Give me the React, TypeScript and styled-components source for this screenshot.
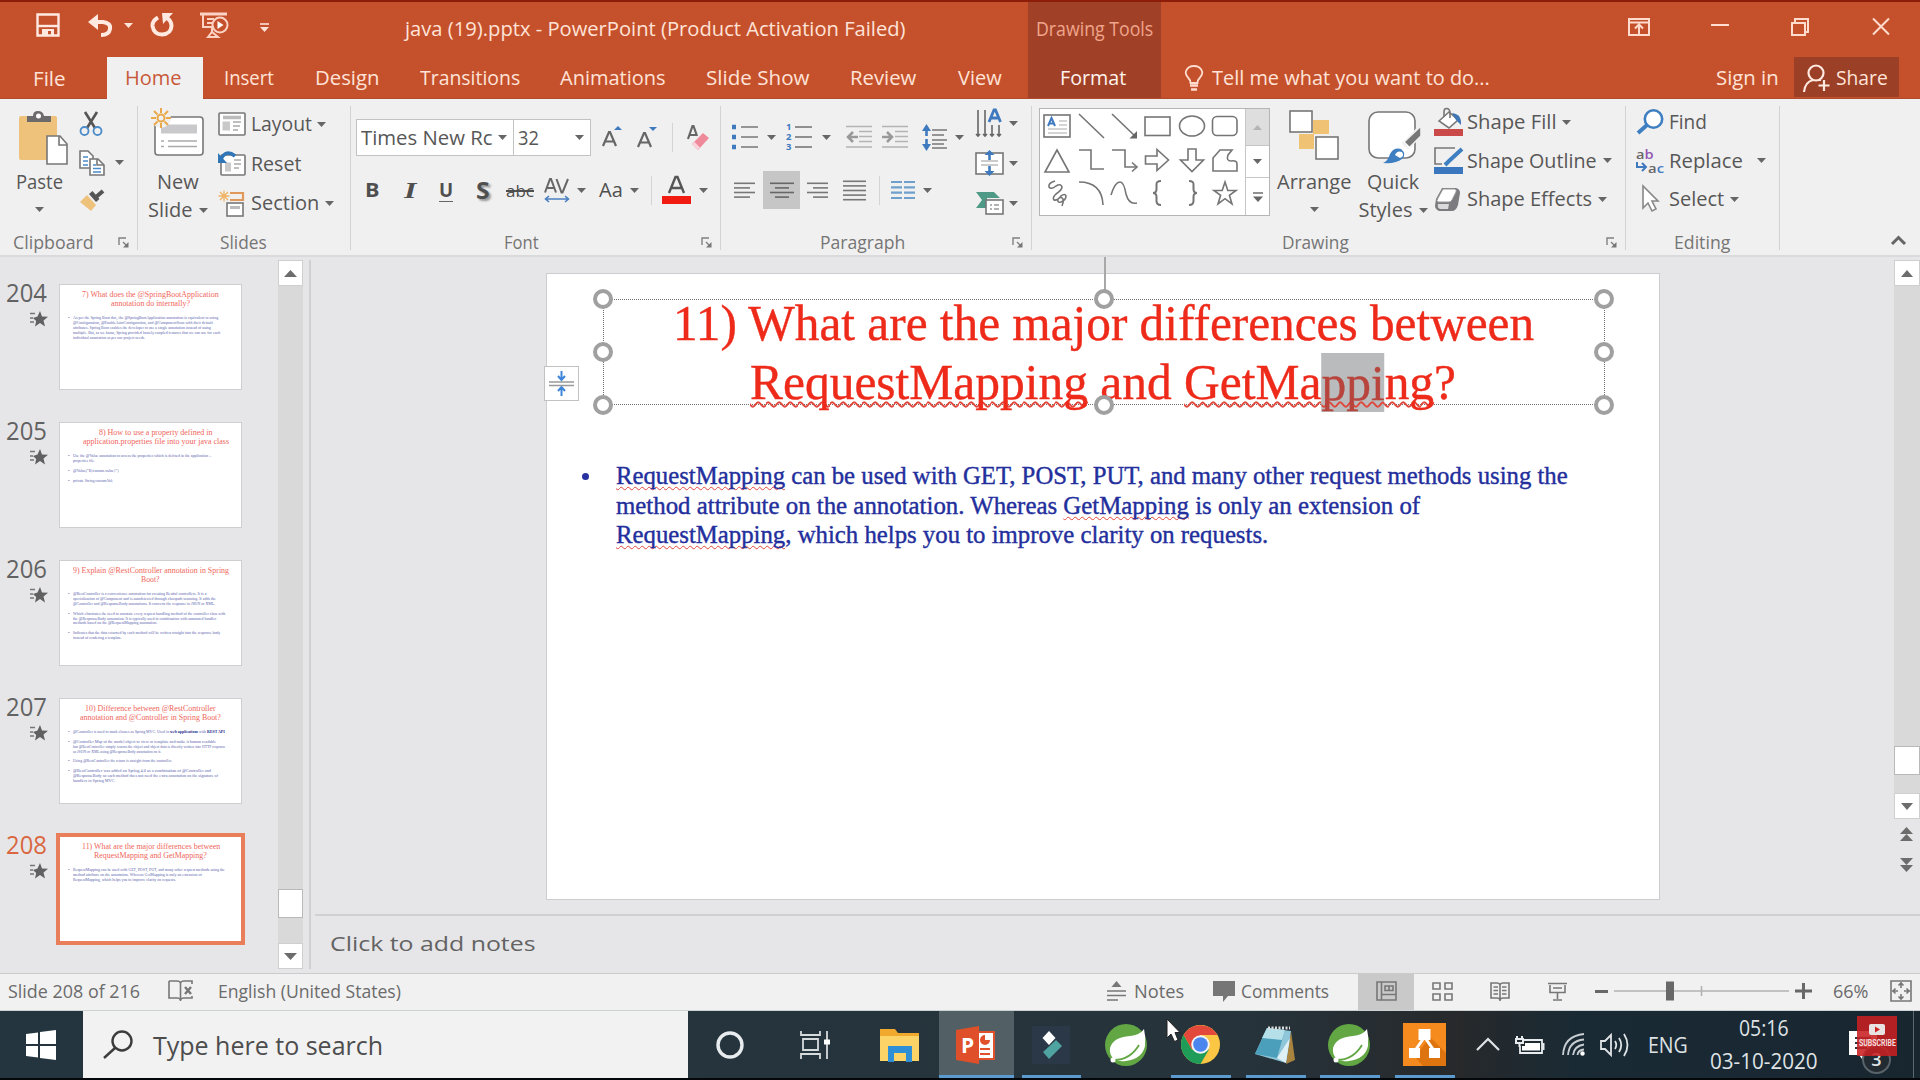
import React, { useLayoutEffect, useRef, useState } from 'react';
import styled, { createGlobalStyle, css } from 'styled-components';

const Global = createGlobalStyle`
  *, *::before, *::after { box-sizing: border-box; }
  html, body { margin: 0; padding: 0; background: #e6e6e8; }
  body { width: 1920px; height: 1080px; overflow: hidden; }
  svg { display: block; flex: none; overflow: visible; }
`;

const ui = '"Open Sans", "Noto Sans", sans-serif';
const serif = '"Liberation Serif", "Times New Roman", serif';
const ink = '#575757';
const blue = '#3f7abf';

/* ---------- text that is condensed to a given width ---------- */

const FitBox = styled.span<{ $w: number }>`
  display: block;
  flex: none;
  width: ${p => p.$w}px;
  white-space: nowrap;
`;
const FitInner = styled.span`
  display: inline-block;
  transform-origin: 0 50%;
  white-space: pre;
`;
function Fit({ w, children }: { w: number; children: React.ReactNode }) {
  const ref = useRef<HTMLSpanElement>(null);
  const [k, setK] = useState(1);
  useLayoutEffect(() => {
    const measure = () => ref.current && setK(w / ref.current.offsetWidth);
    measure();
    document.fonts?.ready.then(measure);
  }, [w]);
  return (
    <FitBox $w={w}>
      <FitInner ref={ref} style={{ transform: `scaleX(${k})` }}>{children}</FitInner>
    </FitBox>
  );
}

const Screen = styled.div`
  width: 1920px;
  height: 1080px;
  display: flex;
  flex-direction: column;
  font-family: ${ui};
  color: ${ink};
  overflow: hidden;
  position: relative;
`;

/* ---------- title bar ---------- */

const Header = styled.header`
  flex: none;
  height: 99px;
  background: #c5512c;
  border-top: 2px solid #8d1d08;
  color: #ffe3d8;
  font-size: 20px;
  line-height: 28px;
`;
const TitleRow = styled.div`
  display: flex;
  align-items: center;
  height: 55px;
`;
const TitleItem = styled.div<{ $gap: number; $drop?: number }>`
  margin-left: ${p => p.$gap}px;
  margin-top: ${p => p.$drop ?? -9}px;
  flex: none;
`;
const ContextTitle = styled.div`
  align-self: stretch;
  width: 133px;
  margin-left: 122px;
  padding: 13px 0 0 8px;
  background: #a04127;
  color: #f0a58c;
`;
const TabRow = styled.nav`
  display: flex;
  height: 42px;
  align-items: stretch;
  line-height: 42px;
  border-bottom: 1px solid #b04a2c;
`;
const Tab = styled.div<{ $gap: number; $drop?: number }>`
  margin-left: ${p => p.$gap}px;
  padding-top: ${p => p.$drop ?? 0}px;
  flex: none;
`;
const ActiveTab = styled.div`
  margin-left: 41px;
  width: 96px;
  height: 42px;
  padding-left: 18px;
  background: #f1f0f0;
  color: #c8593a;
`;
const FormatTab = styled.div`
  margin-left: 26px;
  width: 133px;
  padding-left: 32px;
  background: #a04127;
  color: #fff3ee;
`;
const ShareButton = styled.div`
  margin-left: 15px;
  width: 105px;
  height: 40px;
  padding: 2px 0 0 9px;
  display: flex;
  align-items: center;
  gap: 6px;
  background: #9b3f26;
`;

/* ---------- ribbon ---------- */

const Ribbon = styled.section`
  flex: none;
  height: 158px;
  display: flex;
  padding: 7px 0 6px;
  background: #f1f0f0;
  border-bottom: 2px solid #dadadc;
  font-size: 20px;
  line-height: 20px;
`;
const Group = styled.div<{ $w: number }>`
  flex: none;
  width: ${p => p.$w}px;
  height: 144px;
  border-right: 1px solid #d3d3d5;
  display: flex;
  flex-direction: column;
`;
const GroupBody = styled.div`
  height: 128px;
  display: flex;
  align-items: flex-start;
`;
const GroupFooter = styled.div<{ $left: number }>`
  height: 16px;
  padding: 0 8px 0 ${p => p.$left}px;
  display: flex;
  align-items: center;
  justify-content: space-between;
  font-size: 18px;
  line-height: 16px;
  color: #757575;
`;
const BigButton = styled.div<{ $gap: number; $w: number; $top: number }>`
  flex: none;
  margin-left: ${p => p.$gap}px;
  width: ${p => p.$w}px;
  padding-top: ${p => p.$top}px;
  display: flex;
  flex-direction: column;
  align-items: center;
`;
const BigIcon = styled.div<{ $nudge?: number }>`
  height: 62px;
  padding-left: ${p => p.$nudge ?? 0}px;
`;
const BigCaption = styled.div<{ $top?: number }>`
  margin-top: ${p => p.$top ?? 0}px;
  height: 20px;
  display: flex;
  align-items: center;
  gap: 6px;
`;
const ToolStack = styled.div<{ $gap: number; $top: number; $space: number }>`
  flex: none;
  margin-left: ${p => p.$gap}px;
  padding-top: ${p => p.$top}px;
  display: flex;
  flex-direction: column;
  gap: ${p => p.$space}px;
`;
const CommandRow = styled.div`
  height: 30px;
  display: flex;
  align-items: center;
`;
const CommandIcon = styled.div<{ $w: number }>`
  width: ${p => p.$w}px;
  flex: none;
`;
const CaretHolder = styled.div<{ $gap: number }>`
  margin-left: ${p => p.$gap}px;
`;
const ToolRow = styled.div<{ $top: number; $h: number }>`
  margin-top: ${p => p.$top}px;
  height: ${p => p.$h}px;
  display: flex;
  align-items: center;
`;
const Tool = styled.div<{ $gap: number; $w: number; $on?: boolean }>`
  flex: none;
  margin-left: ${p => p.$gap}px;
  width: ${p => p.$w}px;
  ${p => p.$on && css`
    align-self: stretch;
    display: flex;
    align-items: center;
    justify-content: center;
    background: #c6c6c6;
  `}
`;
const Rule = styled.div<{ $gap: number }>`
  flex: none;
  margin-left: ${p => p.$gap}px;
  width: 1px;
  height: 29px;
  background: #d4d4d4;
`;
const Combo = styled.div<{ $w: number; $gap: number }>`
  flex: none;
  margin-left: ${p => p.$gap}px;
  width: ${p => p.$w}px;
  height: 37px;
  border: 1px solid #c3c3c3;
  background: #fff;
  padding: 0 6px 0 4px;
  display: flex;
  align-items: center;
  justify-content: space-between;
`;
const Letter = styled.span<{ $bold?: boolean; $italic?: boolean; $under?: boolean; $strike?: boolean; $shadow?: boolean; $size?: number }>`
  display: block;
  line-height: 26px;
  font-size: ${p => p.$size ?? 20}px;
  font-weight: ${p => (p.$bold ? 700 : 400)};
  font-style: ${p => (p.$italic ? 'italic' : 'normal')};
  font-family: ${p => (p.$italic ? serif : ui)};
  color: #4f4f4f;
  ${p => p.$under && css`border-bottom: 1.5px solid #666; line-height: 23px;`}
  ${p => p.$strike && css`
    padding-top: 2px;
    & > span > span { text-decoration: line-through; text-decoration-thickness: 1.5px; }
  `}
  ${p => p.$shadow && css`text-shadow: 2px 2px 2px #999;`}
`;
const Gallery = styled.div`
  flex: none;
  margin: 2px 0 0 7px;
  width: 231px;
  height: 108px;
  border: 1px solid #b5b5b5;
  background: #fff;
  display: flex;
`;
const ShapeGrid = styled.div`
  width: 205px;
  padding-top: 1px;
  display: grid;
  grid-template-columns: repeat(6, 33.7px);
  grid-auto-rows: 33.6px;
  place-items: center;
`;
const GallerySide = styled.div`
  flex: 1;
  border-left: 1px solid #c6c6c6;
  display: flex;
  flex-direction: column;
`;
const GalleryArrow = styled.div<{ $h: number; $off?: boolean }>`
  height: ${p => p.$h}px;
  display: flex;
  align-items: center;
  justify-content: center;
  background: ${p => (p.$off ? '#dedede' : '#fff')};
  border-bottom: 1px solid #c6c6c6;
  &:last-child { border-bottom: 0; }
`;
const Collapse = styled.div`
  flex: 1;
  display: flex;
  align-items: flex-end;
  justify-content: flex-end;
  padding: 0 14px 4px 0;
`;

/* ---------- icons ---------- */

type SvgProps = { w: number; h: number; children: React.ReactNode; c?: string; sw?: number };
const Ic = ({ w, h, children, c = '#777', sw = 1.6 }: SvgProps) => (
  <svg width={w} height={h} viewBox={`0 0 ${w} ${h}`} fill="none" stroke={c} strokeWidth={sw}>{children}</svg>
);
const Caret = ({ c = '#666', up }: { c?: string; up?: boolean }) => (
  <Ic w={9} h={5} c="none"><path d={up ? 'M0 5L4.5 0L9 5Z' : 'M0 0H9L4.5 5Z'} fill={c} /></Ic>
);
const Launcher = () => (
  <Ic w={11} h={11} c="#808080" sw={1.4}><path d="M1 8V1H8M5 5L9 9" /><path d="M10.5 5V10.5H5Z" fill="#777" stroke="none" /></Ic>
);
const Lines = ({ w, rows, c = '#777', gap = 4.6 }: { w: number; rows: [number, number][]; c?: string; gap?: number }) => (
  <Ic w={w} h={rows.length * gap} c={c} sw={1.6}>
    {rows.map(([a, b], i) => <path key={i} d={`M${a} ${gap / 2 + i * gap}H${b}`} />)}
  </Ic>
);

const PasteIcon = () => (
  <Ic w={50} h={56}>
    <rect x="0" y="6" width="38" height="44" rx="2" fill="#eec27b" stroke="none" />
    <path d="M8 12V6H14Q14 1 19 1T25 6H32V12Z" fill="#6d6a6c" stroke="none" /><circle cx="19.500" cy="6" r="2.500" fill="#fff" stroke="none" />
    <path d="M28 26H41L48 34V54H28Z" fill="#fff" /><path d="M40 26V35H48" />
  </Ic>
);
const CutIcon = () => (
  <Ic w={26} h={26}>
    <path d="M6 1L16 17M18 1L8 17" stroke="#555" strokeWidth="2.600" />
    <circle cx="5.500" cy="20" r="4" stroke="#4a8bc9" strokeWidth="1.800" /><circle cx="18.500" cy="20" r="4" stroke="#4a8bc9" strokeWidth="1.800" />
  </Ic>
);
const CopyIcon = () => (
  <Ic w={26} h={26}>
    <path d="M1 1H9L14 6V18H1Z" fill="#fff" /><path d="M4 7H9M4 11H9M4 15H9" stroke="#4a8bc9" />
    <path d="M11 9H19L25 15V25H11Z" fill="#fff" /><path d="M18 9V15H25" /><path d="M14 15H17M14 18.500H22M14 22H22" stroke="#4a8bc9" />
  </Ic>
);
const BrushIcon = () => (
  <Ic w={26} h={23}>
    <path d="M8 6L17 16L12 22L1 13Z" fill="#eec27b" stroke="none" />
    <path d="M10 5L13.500 2L20.500 10L17 13Z" fill="#555" stroke="none" /><path d="M17 8L24 2" stroke="#555" strokeWidth="4" />
  </Ic>
);
const NewSlideIcon = () => (
  <Ic w={54} h={49}>
    <rect x="4" y="9" width="48" height="38" rx="3" fill="#fff" />
    <path d="M10 21H46" stroke="#c9c9cc" strokeWidth="9" /><path d="M10 33H13M17 33H46M10 38.500H13M17 38.500H46" stroke="#aaa" />
    <circle cx="10" cy="10" r="10" fill="#f1f0f0" stroke="none" />
    <g stroke="#e9a94a" strokeWidth="2"><path d="M10 0V5M10 15V20M0 10H5M15 10H20M3 3L6.500 6.500M13.500 13.500L17 17M17 3L13.500 6.500M6.500 13.500L3 17" /><circle cx="10" cy="10" r="3.500" /></g>
  </Ic>
);
const LayoutIcon = () => (
  <Ic w={28} h={24}><rect x="1" y="1" width="26" height="22" rx="1" fill="#fff" /><path d="M5 5.500H23" stroke="#bbb" strokeWidth="3.500" /><path d="M4.500 14H12" stroke="#c9c9c9" strokeWidth="9" /><path d="M15 10H23M15 14H22M15 18H20" stroke="#aaa" /></Ic>
);
const ResetIcon = () => (
  <Ic w={28} h={25}><rect x="3" y="4" width="24" height="20" rx="1" fill="#fff" /><path d="M7 16H13" stroke="#c9c9c9" strokeWidth="9" /><path d="M16 9H23M16 13H23M16 17H21" stroke="#aaa" /><path d="M17 5Q8 -2 3 8" stroke="#2f76b8" strokeWidth="3.500" /><path d="M0 2V12H9Z" fill="#2f76b8" stroke="none" /></Ic>
);
const SectionIcon = () => (
  <Ic w={28} h={27}><path d="M12 3H25V10H12" stroke="#e0995a" strokeWidth="2.200" /><rect x="9" y="13" width="16" height="13" fill="#fff" /><path d="M12 17.500H22" stroke="#bbb" strokeWidth="3" /><path d="M6 0.500V11.500M0.500 6H11.500M2 2L10 10M10 2L2 10" stroke="#f0b264" strokeWidth="1.300" /></Ic>
);
const SizeA = ({ down }: { down?: boolean }) => (
  <Ic w={22} h={24}>
    {down
      ? <><path d="M1 21L7 7H8L14 21M3.500 16.500H11.500" stroke="#666" strokeWidth="2.200" /><path d="M12 1H20L16 5Z" fill={blue} stroke="none" /></>
      : <><path d="M1 20L7 6H8L14 20M3.500 15.500H11.500" stroke="#666" strokeWidth="2.200" /><path d="M12 4L16 0L20 4Z" fill={blue} stroke="none" /></>}
  </Ic>
);
const EraserIcon = () => (
  <Ic w={24} h={26}><path d="M1 14L5.500 1H6.500L10 11M3 10H9" stroke="#666" strokeWidth="2.200" /><path d="M5 19L16 8L22 13L11 25Z" fill="#ef8a9b" stroke="none" /><path d="M5 19L7.500 17L13 22.500L11 25Z" fill="#fbd3da" stroke="none" /></Ic>
);
const SpacingIcon = () => (
  <Ic w={26} h={25} c="#666"><path d="M1 14.500L6 1H7L12 14.500M3 10H10M12.500 1L17.500 14.500H18.500L24 1" strokeWidth="2" /><path d="M2 21H24M5 18L1.500 21L5 24M21 18L24.500 21L21 24" stroke="#4a7fc0" /></Ic>
);
const FontColorIcon = () => (
  <Ic w={29} h={28}><path d="M7 17L13.500 1H15.500L22 17M9.500 12H19.500" stroke="#555" strokeWidth="2.400" /><rect x="0" y="20" width="29" height="8" fill="#f21b12" stroke="none" /></Ic>
);
const BulletsIcon = () => (
  <Ic w={26} h={26}><path d="M9 3H26M9 13H26M9 23H26" /><path d="M0 3H4M0 13H4M0 23H4" stroke={blue} strokeWidth="4.400" /></Ic>
);
const DigitLabel = styled.span`
  width: 8px;
  font: 700 9.5px/10px ${ui};
  color: ${blue};
`;
const NumberRow = styled.div`
  display: flex;
  align-items: center;
  height: 10px;
`;
const NumberingIcon = () => (
  <div>{['1', '2', '3'].map(n => <NumberRow key={n}><DigitLabel>{n}</DigitLabel><Ic w={18} h={2}><path d="M1 1H18" /></Ic></NumberRow>)}</div>
);
const IndentIcon = ({ right }: { right?: boolean }) => (
  <Ic w={26} h={24} c="#b3b3b3"><path d="M0 1.500H26M13 6.500H26M13 11.500H26M13 16.500H26M0 22H26" /><path d={right ? 'M0 12H9M5 7L10 12L5 17' : 'M2 12H12M7 7L2 12L7 17'} stroke="#999" strokeWidth="2.500" /></Ic>
);
const LineSpacingIcon = () => (
  <Ic w={26} h={27}><path d="M10 6H25M10 11H22M10 16H25M10 20H22M10 24H25" /><path d="M4.500 2V12M4.500 15V25" stroke={blue} strokeWidth="2.600" /><path d="M0 7L4.500 0L9 7ZM0 20L4.500 27L9 20Z" fill={blue} stroke="none" /></Ic>
);
const TextDirIcon = () => (
  <Ic w={29} h={28}><path d="M3 1V27M10 1V27M17 16V27M24 16V27M1 25L3 27L5 25M8 25L10 27L12 25M15 25L17 27L19 25M22 25L24 27L26 25" stroke="#666" /><path d="M14 13L19 1H20.500L25.500 13M16 9H23.500" stroke={blue} strokeWidth="2.800" /></Ic>
);
const AlignTextIcon = () => (
  <Ic w={29} h={26}><rect x="1" y="3" width="27" height="21" fill="#fff" /><path d="M6 11H23M6 15H23" stroke="#bbb" /><path d="M14.500 3V10M14.500 16V23" stroke={blue} strokeWidth="2.600" /><path d="M9.500 5L14.500 0L19.500 5ZM9.500 21L14.500 26L19.500 21Z" fill={blue} stroke="none" /></Ic>
);
const SmartArtIcon = () => (
  <Ic w={29} h={24}><path d="M1 1H19L25 7H12V17H1L7 9Z" fill="#4f9a86" stroke="none" /><rect x="11" y="9" width="17" height="14" fill="#fff" /><path d="M15 14H17M19 14H24M15 18H17M19 18H24" stroke="#999" /></Ic>
);
const ColumnsIcon = () => (
  <Ic w={24} h={20} c="#6fa0cc" sw={2.2}><path d="M0 2H11M0 7.300H11M0 12.600H11M0 18H11M13 2H24M13 7.300H24M13 12.600H24M13 18H24" /></Ic>
);
const shapes: React.ReactNode[] = [
  <><rect x="1" y="2" width="26" height="22" /><path d="M16 8H24M16 12H24M5 16H24M5 20H24" stroke="#aaa" strokeWidth="1.200" /><path d="M5 13L8.500 5L12 13M6 10.500H11" stroke={blue} strokeWidth="2" /></>,
  <path d="M2 1L27 25" />,
  <><path d="M2 1L26 24" /><path d="M27 18V25.500H19.500Z" fill="#666" stroke="none" /></>,
  <rect x="1" y="4" width="25" height="18.500" />,
  <ellipse cx="14" cy="13" rx="12.500" ry="10" />,
  <rect x="1.500" y="3.500" width="24.500" height="19" rx="4.500" />,
  <path d="M14 3L26 25H2Z" />,
  <path d="M2 3H14V22H27" />,
  <><path d="M2 3H15V20H26" /><path d="M22 15.500L27 20L22 24.500" /></>,
  <path d="M1.500 9H13V2.500L24.500 13L13 23.500V17H1.500Z" />,
  <path d="M10 2H18V13H25.500L14 24.500L2.500 13H10Z" />,
  <path d="M2 24V11L9 3H21L17 8Q15 14 20 14Q26 13 26 17V24Z" />,
  <path d="M12 1Q5 3 6 7Q8 10 13 6Q18 3 19 7Q19 10 13 14Q9 18 11 20Q14 21 18 16Q22 13 23 16Q23 20 18 22Q14 23 15 19Q18 16 20 19Q21 22 19 26" strokeWidth="1.600" />,
  <path d="M2 2Q25 2 26 25" />,
  <path d="M1 15Q5 2 10 2Q14 2 16 14Q19 25 27 23" />,
  <path d="M17 1Q12 1 12.500 5V9Q12.500 13 9 13Q12.500 13 12.500 17V21Q12.500 25 17 25" strokeWidth="2" />,
  <path d="M11 1Q16 1 15.500 5V9Q15.500 13 19 13Q15.500 13 15.500 17V21Q15.500 25 11 25" strokeWidth="2" />,
  <path d="M14 2L16.800 10.500H25L18.400 15.300L21 24L14 18.700L7 24L9.600 15.300L3 10.500H11.200Z" />,
];
const ArrangeIcon = () => (
  <Ic w={50} h={51}><path d="M24 10H40V24H24ZM10 24H25V39H10Z" fill="#f0c274" stroke="none" /><rect x="1" y="1" width="22" height="21" fill="#fff" /><rect x="27" y="27" width="22" height="22" fill="#fff" /></Ic>
);
const QuickIcon = () => (
  <Ic w={54} h={54}>
    <rect x="1" y="1" width="46" height="46" rx="9" fill="#fff" /><path d="M53 12L34 33L40 38L54 24Z" fill="#f1f0f0" stroke="none" />
    <path d="M53 15V25L41 37L35 32Z" fill="#777" stroke="#f1f0f0" /><path d="M36 31L43 38" stroke="#fff" strokeWidth="1.500" />
    <path d="M15 52Q20 50 22 43Q26 36 33 38Q39 43 34 48Q28 53 15 52Z" fill="#3d7fc0" stroke="none" /><path d="M27 44Q29 39 34 41Q37 45 32 47Z" fill="#fff" stroke="none" />
  </Ic>
);
const FillIcon = () => (
  <Ic w={29} h={28}><path d="M5 13L15 4L24 12L15 20Z" fill="#fff" /><path d="M10 9V4Q10 0 13 0.500T16 5V10" /><path d="M18 5Q28 6 27 17L22 12Z" fill="#3d77b5" stroke="none" /><rect y="21" width="29" height="7" fill="#c94a48" stroke="none" /></Ic>
);
const OutlineIcon = () => (
  <Ic w={29} h={28}><path d="M8 17H1V1H21" /><path d="M28 2L15 14L11 18" stroke="#3d7fc0" strokeWidth="4" /><rect y="20" width="29" height="7" fill="#3a77be" stroke="none" /></Ic>
);
const EffectsIcon = () => (
  <Ic w={29} h={25}><path d="M8 1H22Q26 2 26 6L24 18Q22 24 18 24H5Q1 22 1 19L2 12Z" fill="#7c7c80" stroke="none" /><path d="M9 2H21Q23 3 22 5L18 13Q17 15 15 15H4Q2 14 4 11Z" fill="#fff" stroke="#999" strokeWidth="1" /><path d="M4 17H15L14 22H6Q3 21 4 17Z" fill="#dadadc" stroke="none" /></Ic>
);
const FindIcon = () => (
  <Ic w={28} h={26} c="#3d7fc0"><circle cx="17.500" cy="10" r="8.700" fill="#fff" strokeWidth="2.600" /><path d="M11 16L2 24" strokeWidth="4" /></Ic>
);
const ReplaceBox = styled.div`
  display: flex;
  flex-direction: column;
  font: 600 13px/14px ${ui};
  color: #666;
`;
const ReplaceLine = styled.div`
  display: flex;
  height: 14px;
`;
const Tint = styled.span<{ $c: string }>`
  color: ${p => p.$c};
`;
const ReplaceIcon = () => (
  <ReplaceBox>
    <ReplaceLine><Fit w={18}>a<Tint $c="#9257b0">b</Tint></Fit></ReplaceLine>
    <ReplaceLine><Ic w={12} h={13} c={blue} sw={2}><path d="M1 1V6H9M6 2L10 6L6 10" /></Ic><Fit w={16}>a<Tint $c={blue}>c</Tint></Fit></ReplaceLine>
  </ReplaceBox>
);
const SelectIcon = () => (
  <Ic w={28} h={28}><path d="M7 1V23L12 18L16 26L20 24L16 16H22Z" fill="#fff" stroke="#888" /></Ic>
);

type CmdProps = { icon: React.ReactNode; iw: number; label: string; w: number; caret?: number };
const Command = ({ icon, iw, label, w, caret }: CmdProps) => (
  <CommandRow>
    <CommandIcon $w={iw}>{icon}</CommandIcon>
    <Fit w={w}>{label}</Fit>
    {caret !== undefined && <CaretHolder $gap={caret}><Caret /></CaretHolder>}
  </CommandRow>
);

function RibbonGroup({ w, name, nameW, left, launcher, children }: { w: number; name: string; nameW: number; left: number; launcher?: boolean; children: React.ReactNode }) {
  return (
    <Group $w={w}>
      <GroupBody>{children}</GroupBody>
      <GroupFooter $left={left}><Fit w={nameW}>{name}</Fit>{launcher && <Launcher />}</GroupFooter>
    </Group>
  );
}

/* ---------- workspace ---------- */

const Workspace = styled.main`
  flex: none;
  height: 716px;
  display: flex;
  background: #e6e6e8;
`;
const ThumbPane = styled.aside`
  width: 278px;
  padding-top: 27px;
  overflow: hidden;
`;
const ThumbRow = styled.div`
  height: 138px;
  display: flex;
`;
const ThumbMeta = styled.div<{ $on?: boolean }>`
  width: 59px;
  margin-top: -1px;
  padding-left: 6px;
  font-size: 25px;
  line-height: 18px;
  color: ${p => (p.$on ? '#d9663f' : '#626262')};
`;
const StarHolder = styled.div`
  margin: 10px 0 0 24px;
`;
const Thumb = styled.div<{ $on?: boolean }>`
  width: 183px;
  height: 106px;
  background: #fff;
  border: 1px solid #cfcfd1;
  font-family: ${serif};
  padding-top: 5px;
  ${p => p.$on && css`border-color: #fff; outline: 4px solid #e87f5a; outline-offset: -1px;`}
`;
const ThumbTitle = styled.div<{ $shift?: number }>`
  height: 9.2px;
  display: flex;
  justify-content: center;
  padding-left: ${p => p.$shift ?? 0}px;
  font-size: 8.6px;
  line-height: 9.2px;
  color: #f0655a;
`;
const ThumbBody = styled.div`
  margin-top: 8px;
  font-size: 4.6px;
  line-height: 4.83px;
  color: #5a5fae;
`;
const ThumbLine = styled.div`
  height: 4.83px;
  display: flex;
`;
const ThumbBullet = styled.span`
  width: 13px;
  padding-left: 8px;
  flex: none;
`;
const Strong = styled.b`
  color: #20278c;
`;
const ScrollBar = styled.div<{ $w: number }>`
  flex: none;
  width: ${p => p.$w}px;
  padding-top: 3px;
  display: flex;
  flex-direction: column;
`;
const ScrollButton = styled.div`
  height: 26px;
  background: #fff;
  border: 1px solid #cfcfcf;
  display: flex;
  align-items: center;
  justify-content: center;
`;
const Track = styled.div<{ $h: number }>`
  height: ${p => p.$h}px;
  background: #d9d9da;
`;
const ScrollThumb = styled.div`
  height: 29px;
  background: #fff;
  border: 1px solid #b9b9b9;
`;
const PageArrows = styled.div`
  padding: 8px 0 0 6px;
  display: flex;
  flex-direction: column;
  gap: 17px;
`;
const PaneEdge = styled.div`
  margin: 3px 4px 4px 6px;
  width: 2px;
  background: #d0d0d2;
`;
const Editor = styled.div`
  flex: 1;
  display: flex;
  flex-direction: column;
`;
const EditorTop = styled.div`
  height: 659px;
  display: flex;
  border-bottom: 2px solid #d0d0d2;
`;
const Canvas = styled.div`
  width: 1579px;
  padding: 16px 0 0 231px;
`;
const Slide = styled.article`
  position: relative;
  width: 1114px;
  height: 627px;
  background: #fff;
  border: 1px solid #cdcdcf;
  font-family: ${serif};
  padding: 20px 0 0 55px;
`;
const SlideTitle = styled.h1`
  margin: 0;
  width: 1002px;
  font-size: 51px;
  font-weight: 400;
  line-height: 59px;
  color: #ee2a1a;
  display: flex;
  flex-direction: column;
  align-items: center;
  -webkit-text-stroke: 0.4px currentColor;
`;
const Typo = styled.span<{ $weight?: number }>`
  text-decoration: underline wavy #e0473c ${p => p.$weight ?? 1}px;
  text-decoration-skip-ink: none;
  text-underline-offset: 2px;
`;
const Selected = styled.span`
  padding: 1.5px 0;
  background: #b9bbbc;
  color: #b8453d;
`;
const BodyRow = styled.div`
  margin-top: 49px;
  margin-left: -20px;
  display: flex;
`;
const Dot = styled.div`
  margin: 12px 27px 0 0;
  width: 7px;
  height: 7px;
  border-radius: 50%;
  background: #2731a0;
`;
const BodyText = styled.div`
  font-size: 25px;
  line-height: 29.5px;
  color: #232f9c;
  -webkit-text-stroke: 0.4px #232f9c;
`;
const Frame = styled.div`
  position: absolute;
  left: 56px;
  top: 25px;
  width: 1002px;
  height: 106px;
  border: 1px dotted #6f6f6f;
`;
const Handle = styled.i<{ $x: number; $y: number }>`
  position: absolute;
  left: ${p => p.$x - 11}px;
  top: ${p => p.$y - 11}px;
  width: 20px;
  height: 20px;
  border-radius: 50%;
  border: 4px solid #a0a0a0;
  background: #fff;
`;
const RotateStem = styled.i`
  position: absolute;
  left: 557px;
  top: -17px;
  width: 2px;
  height: 34px;
  background: #a8a8a8;
`;
const FitButton = styled.div`
  position: absolute;
  left: -3px;
  top: 92px;
  width: 35px;
  height: 35px;
  background: #fff;
  border: 1px solid #c2c2c2;
  padding: 3px;
`;
const Notes = styled.div`
  flex: 1;
  padding: 13px 0 0 15px;
  font-size: 20.5px;
  line-height: 28px;
  color: #636363;
`;

const StarIcon = () => (
  <Ic w={18} h={16} c="none"><path d="M10 0L12 5.500L18 5.800L13.500 9.500L15 15.500L10 12L5 15.500L6.200 10L3 7L7.500 5.500Z" fill="#606060" /><path d="M0 2.500H5M0 7H3M0 11H4" stroke="#777" strokeWidth="1.500" /></Ic>
);

type ThumbData = { n: number; titles: [string, number][]; lines: [string, number, boolean?][]; shift?: number };
const thumbs: ThumbData[] = [
  { n: 204, titles: [['7) What does the @SpringBootApplication', 137], ['annotation do internally?', 79]], lines: [
    ['As per the Spring Boot doc, the @SpringBootApplication annotation is equivalent to using', 145, true],
    ['@Configuration, @EnableAutoConfiguration, and @ComponentScan with their default', 140],
    ['attributes. Spring Boot enables the developer to use a single annotation instead of using', 138],
    ['multiple. But, as we know, Spring provided loosely coupled features that we can use for each', 147],
    ['individual annotation as per our project needs.', 72]] },
  { n: 205, shift: 10, titles: [['8) How to use a property defined in', 113], ['application.properties file into your java class', 146]], lines: [
    ['Use the @Value annotation to access the properties which is defined in the application –', 138, true], ['properties file.', 22], ['', 0],
    ['@Value("${custom.value}")', 46, true], ['', 0], ['private String customVal;', 40, true]] },
  { n: 206, titles: [['9) Explain @RestController annotation in Spring', 156], ['Boot?', 19]], lines: [
    ['@RestController is a convenience annotation for creating Restful controllers. It is a', 133, true],
    ['specialization of @Component and is autodetected through classpath scanning. It adds the', 143],
    ['@Controller and @ResponseBody annotations. It converts the response to JSON or XML.', 142], ['', 0],
    ['Which eliminates the need to annotate every request handling method of the controller class with', 152, true],
    ['the @ResponseBody annotation. It is typically used in combination with annotated handler', 143],
    ['methods based on the @RequestMapping annotation.', 84], ['', 0],
    ['Indicates that the data returned by each method will be written straight into the response body', 147, true], ['instead of rendering a template.', 49]] },
  { n: 207, titles: [['10) Difference between @RestController', 131], ['annotation and @Controller in Spring Boot?', 141]], lines: [
    ['@', 152, true], ['', 0],
    ['@Controller Map of the model object to view or template and make it human readable', 143, true],
    ['but @RestController simply returns the object and object data is directly written into HTTP response', 152],
    ['as JSON or XML using @ResponseBody annotation on it.', 88], ['', 0],
    ['Using @RestController the return is straight from the controller.', 99, true], ['', 0],
    ['@RestController was added on Spring 4.0 as a combination of @Controller and', 138, true],
    ['@ResponseBody so each method does not need the extra annotation on the signature of', 145], ['handlers in Spring MVC.', 42]] },
  { n: 208, titles: [['11) What are the major differences between', 138], ['RequestMapping and GetMapping?', 113]], lines: [
    ['RequestMapping can be used with GET, POST, PUT, and many other request methods using the', 152, true],
    ['method attribute on the annotation. Whereas GetMapping is only an extension of', 129],
    ['RequestMapping, which helps you to improve clarity on requests.', 103]] },
];

/* ---------- status bar ---------- */

const StatusBar = styled.footer`
  flex: none;
  height: 38px;
  border-top: 1px solid #cbcbcb;
  border-bottom: 1px solid #cdd2d4;
  background: #f1f1f1;
  display: flex;
  align-items: center;
  font-size: 17.5px;
  line-height: 24px;
  color: #6b6b6b;
`;
const StatusItem = styled.div<{ $gap: number }>`
  flex: none;
  margin: -2px 0 0 ${p => p.$gap}px;
`;
const ActiveView = styled.div`
  flex: none;
  margin-left: 29px;
  width: 56px;
  align-self: stretch;
  background: #c9c9c9;
  display: flex;
  align-items: center;
  justify-content: center;
  padding-bottom: 2px;
`;

/* ---------- task bar ---------- */

const TaskBar = styled.div`
  flex: none;
  height: 69px;
  border-bottom: 2px solid #05080a;
  background: linear-gradient(90deg, #24353f 0, #26333b 65%, #27292b 76%, #1a2a34 82%, #182630 100%);
  display: flex;
  align-items: center;
  color: #dfe3e6;
`;
const StartButton = styled.div`
  width: 83px;
  padding-left: 26px;
`;
const SearchBox = styled.div`
  width: 605px;
  align-self: stretch;
  background: #f2f2f2;
  display: flex;
  align-items: center;
  padding-left: 20px;
  gap: 20px;
  font-size: 25px;
  line-height: 34px;
  color: #4d4d4d;
`;
const TaskIcon = styled.div<{ $gap: number }>`
  flex: none;
  margin-left: ${p => p.$gap}px;
`;
const TaskTile = styled.div<{ $gap: number; $w: number; $active?: boolean }>`
  flex: none;
  align-self: stretch;
  margin-left: ${p => p.$gap}px;
  width: ${p => p.$w}px;
  display: flex;
  align-items: center;
  justify-content: center;
  padding: 3px 2px 0 0;
  border-bottom: 3px solid #5c9bd0;
  background: ${p => (p.$active ? '#526066' : 'transparent')};
`;
const TrayText = styled.div<{ $gap: number }>`
  flex: none;
  margin-left: ${p => p.$gap}px;
  font-size: 21px;
  line-height: 28px;
`;
const Clock = styled.div`
  flex: none;
  margin-left: 22px;
  width: 108px;
  display: flex;
  flex-direction: column;
  align-items: center;
  font-size: 21px;
  line-height: 33px;
`;
const Notice = styled.div`
  position: relative;
  flex: none;
  margin-left: 31px;
  width: 42px;
  height: 62px;
  padding-top: 15px;
`;
const Badge = styled.div`
  position: absolute;
  left: 13px;
  top: 31px;
  width: 29px;
  height: 29px;
  border-radius: 50%;
  border: 2px solid #59636a;
  background: #222b31;
  text-align: center;
  font: 600 18px/25px ${ui};
`;
const Subscribe = styled.div`
  position: absolute;
  left: 8px;
  top: 2px;
  width: 40px;
  height: 40px;
  background: rgba(200, 32, 34, 0.88);
  display: flex;
  flex-direction: column;
  align-items: center;
  padding-top: 8px;
  gap: 1px;
  font: 700 9px/14px "Roboto", ${ui};
  color: #f4dede;
`;
const DesktopEdge = styled.div`
  margin-left: 22px;
  width: 1px;
  align-self: stretch;
  background: #5b666d;
`;
const Pointer = styled.div`
  position: absolute;
  left: 1166px;
  top: 1018px;
`;

const SpringIcon = () => (
  <Ic w={42} h={42} c="none"><circle cx="21" cy="21" r="21" fill="#62a744" /><path d="M39 5Q35 11 25 12Q8 13 5 24Q4 31 9 35Q13 38 21 37Q37 35 40 22Q41 13 39 5Z" fill="#fff" /><path d="M9 36Q25 36 34 21" stroke="#62a744" strokeWidth="1.800" fill="none" /><circle cx="8" cy="36" r="2.500" fill="#fff" /></Ic>
);
const ChromeIcon = () => (
  <Ic w={39} h={39} c="none">
    <circle cx="19.500" cy="19.500" r="19.500" fill="#fbc643" />
    <path d="M2.600 9.800A19.500 19.500 0 0 0 19.500 39L28 24.500L11 24.500Z" fill="#1f9d58" />
    <path d="M2.600 9.800L11 24.500L19.500 10H36.400A19.500 19.500 0 0 0 2.600 9.800Z" fill="#e2493b" />
    <circle cx="19.500" cy="19.500" r="9.300" fill="#f4f4f4" /><circle cx="19.500" cy="19.500" r="7.300" fill="#4a86ee" />
  </Ic>
);
const PptLetter = styled.div`
  width: 39px;
  height: 38px;
  position: relative;
`;
const PptGlyph = styled.span`
  position: absolute;
  left: 5px;
  top: 5px;
  font: 700 21px/28px ${ui};
  color: #fff;
`;
const PptIcon = () => (
  <PptLetter>
    <Ic w={39} h={38} c="none"><rect x="20" y="6" width="18" height="27" fill="#fff" stroke="#e0502a" strokeWidth="2" /><circle cx="29" cy="14" r="5" fill="#e0502a" /><path d="M29 14V9H34V14Z" fill="#fff" /><path d="M24 23H34M24 28H34" stroke="#e0502a" strokeWidth="2" /><path d="M0 4L23 0V38L0 34Z" fill="#df4f29" /></Ic>
    <PptGlyph>P</PptGlyph>
  </PptLetter>
);

export default function App() {
  return (
    <Screen>
      <Global />
      <Header>
        <TitleRow>
          <TitleItem $gap={36}><Ic w={24} h={24} c="#ffe9e0" sw={2.4}><path d="M1.500 1.500H22.500V22.500H1.500Z" /><path d="M2 13H22" /><path d="M6 16H18V23H15V18H12V23H6Z" fill="#ffe9e0" stroke="none" /></Ic></TitleItem>
          <TitleItem $gap={28}><Ic w={25} h={23} c="#ffe9e0" sw={4}><path d="M5 8H15Q23 9 22 15Q21 21 13 21" /><path d="M0 8L10 0V16Z" fill="#ffe9e0" stroke="none" /></Ic></TitleItem>
          <TitleItem $gap={11}><Caret c="#ffe3d8" /></TitleItem>
          <TitleItem $gap={17}><Ic w={24} h={24} c="#ffe9e0" sw={4}><path d="M8 4.500Q2 8 2.500 13Q4 21.500 12 21.500Q21 21 21.500 13Q21.500 8 17 5" /><path d="M12 0H23L13 11Z" fill="#ffe9e0" stroke="none" /></Ic></TitleItem>
          <TitleItem $gap={26}><Ic w={28} h={26} c="#fbd2c3" sw={2}><path d="M0 2H27" strokeWidth="3" /><path d="M3 3V15H14M7 7H14M7 11H12M12 16V20M8 25L12 20L18 25Z" /><circle cx="20" cy="13" r="7.500" /><path d="M17.500 9L23.500 13L17.500 17Z" fill="#fff" stroke="none" /></Ic></TitleItem>
          <TitleItem $gap={32} $drop={-3}><Ic w={9} h={10} c="#ffe3d8"><path d="M0 1H9" /><path d="M0 4H9L4.500 9Z" fill="#ffe3d8" stroke="none" /></Ic></TitleItem>
          <TitleItem $gap={136} $drop={-1}><Fit w={501}>java (19).pptx - PowerPoint (Product Activation Failed)</Fit></TitleItem>
          <ContextTitle><Fit w={117}>Drawing Tools</Fit></ContextTitle>
          <TitleItem $gap={467} $drop={-6}><Ic w={22} h={18} c="#ffdccd" sw={2}><path d="M1 1H21V17H1ZM1 4.500H21M11 16V7M7 10.500L11 6.500L15 10.500" /></Ic></TitleItem>
          <TitleItem $gap={61}><Ic w={18} h={2} c="#ffdccd" sw={2}><path d="M0 1H18" /></Ic></TitleItem>
          <TitleItem $gap={62} $drop={-6}><Ic w={19} h={18} c="#ffdccd" sw={2}><path d="M1 5H14V17H1ZM4 5V1H17V14H14" /></Ic></TitleItem>
          <TitleItem $gap={62} $drop={-6}><Ic w={18} h={17} c="#ffdccd" sw={2}><path d="M1 0.500L17 16.500M17 0.500L1 16.500" /></Ic></TitleItem>
        </TitleRow>
        <TabRow>
          <Tab $gap={33} $drop={1}><Fit w={33}>File</Fit></Tab>
          <ActiveTab><Fit w={57}>Home</Fit></ActiveTab>
          <Tab $gap={21}><Fit w={50}>Insert</Fit></Tab>
          <Tab $gap={41}><Fit w={64}>Design</Fit></Tab>
          <Tab $gap={41}><Fit w={100}>Transitions</Fit></Tab>
          <Tab $gap={40}><Fit w={106}>Animations</Fit></Tab>
          <Tab $gap={40}><Fit w={104}>Slide Show</Fit></Tab>
          <Tab $gap={40}><Fit w={66}>Review</Fit></Tab>
          <Tab $gap={42}><Fit w={44}>View</Fit></Tab>
          <FormatTab><Fit w={66}>Format</Fit></FormatTab>
          <Tab $gap={23} $drop={8}><Ic w={20} h={26} c="#ffdccd" sw={1.8}><path d="M6.500 18Q6.500 15 4 12.500Q1 9 2 6Q4 1 10 1T18 6Q19 9 16 12.500Q13.500 15 13.500 18Z" /><path d="M6 20.500H14M7 24.500H13" strokeWidth="2.600" /></Ic></Tab>
          <Tab $gap={8}><Fit w={278}>Tell me what you want to do...</Fit></Tab>
          <Tab $gap={226}><Fit w={63}>Sign in</Fit></Tab>
          <ShareButton>
            <Ic w={27} h={28} c="#ffe9e0" sw={2.2}><circle cx="13" cy="9" r="7.500" /><path d="M1 28Q2 18 10 16M15 16H18M21 16V27M15.500 21.500H26.500" /></Ic>
            <Fit w={52}>Share</Fit>
          </ShareButton>
        </TabRow>
      </Header>

      <Ribbon>
        <RibbonGroup w={138} name="Clipboard" nameW={81} left={13} launcher>
          <BigButton $gap={14} $w={50} $top={4}>
            <BigIcon $nudge={9}><PasteIcon /></BigIcon>
            <BigCaption><Fit w={47}>Paste</Fit></BigCaption>
            <BigCaption $top={7}><Caret /></BigCaption>
          </BigButton>
          <ToolStack $gap={15} $top={5} $space={13}><CutIcon /><CopyIcon /><BrushIcon /></ToolStack>
          <ToolStack $gap={10} $top={54} $space={0}><Caret /></ToolStack>
        </RibbonGroup>

        <RibbonGroup w={213} name="Slides" nameW={47} left={82}>
          <BigButton $gap={10} $w={60} $top={2}>
            <BigIcon><NewSlideIcon /></BigIcon>
            <BigCaption $top={2}><Fit w={42}>New</Fit></BigCaption>
            <BigCaption $top={8}><Fit w={45}>Slide</Fit><Caret /></BigCaption>
          </BigButton>
          <ToolStack $gap={10} $top={3} $space={9.5}>
            <Command icon={<LayoutIcon />} iw={33} label="Layout" w={61} caret={5} />
            <Command icon={<ResetIcon />} iw={33} label="Reset" w={50} />
            <Command icon={<SectionIcon />} iw={33} label="Section" w={68} caret={6} />
          </ToolStack>
        </RibbonGroup>

        <RibbonGroup w={370} name="Font" nameW={35} left={153} launcher>
          <div>
            <ToolRow $top={13} $h={37}>
              <Combo $gap={5} $w={158}><Fit w={131}>Times New Rc</Fit><Caret /></Combo>
              <Combo $gap={-1} $w={78}><Fit w={21}>32</Fit><Caret /></Combo>
              <Tool $gap={11} $w={22}><SizeA /></Tool>
              <Tool $gap={13} $w={22}><SizeA down /></Tool>
              <Rule $gap={13} />
              <Tool $gap={14} $w={24}><EraserIcon /></Tool>
            </ToolRow>
            <ToolRow $top={19} $h={30}>
              <Tool $gap={14} $w={14}><Letter $bold><Fit w={14}>B</Fit></Letter></Tool>
              <Tool $gap={25} $w={13}><Letter $bold $italic $size={24}><Fit w={12}>I</Fit></Letter></Tool>
              <Tool $gap={22} $w={14}><Letter $bold $under><Fit w={14}>U</Fit></Letter></Tool>
              <Tool $gap={23} $w={15}><Letter $bold $shadow $size={23}><Fit w={14}>S</Fit></Letter></Tool>
              <Tool $gap={15} $w={28}><Letter $strike $size={17}><Fit w={28}>abc</Fit></Letter></Tool>
              <Tool $gap={10} $w={26}><SpacingIcon /></Tool>
              <Tool $gap={7} $w={9}><Caret /></Tool>
              <Tool $gap={13} $w={24}><Letter><Fit w={24}>Aa</Fit></Letter></Tool>
              <Tool $gap={7} $w={9}><Caret /></Tool>
              <Rule $gap={12} />
              <Tool $gap={10} $w={29}><FontColorIcon /></Tool>
              <Tool $gap={8} $w={9}><Caret /></Tool>
            </ToolRow>
          </div>
        </RibbonGroup>

        <RibbonGroup w={311} name="Paragraph" nameW={85} left={99} launcher>
          <div>
            <ToolRow $top={16} $h={30}>
              <Tool $gap={11} $w={26}><BulletsIcon /></Tool>
              <Tool $gap={9} $w={9}><Caret /></Tool>
              <Tool $gap={10} $w={26}><NumberingIcon /></Tool>
              <Tool $gap={10} $w={9}><Caret /></Tool>
              <Tool $gap={15} $w={26}><IndentIcon /></Tool>
              <Tool $gap={10} $w={26}><IndentIcon right /></Tool>
              <Tool $gap={14} $w={26}><LineSpacingIcon /></Tool>
              <Tool $gap={7} $w={9}><Caret /></Tool>
            </ToolRow>
            <ToolRow $top={19} $h={38}>
              <Tool $gap={13} $w={21}><Lines w={21} rows={[[0, 21], [0, 16], [0, 21], [0, 16]]} /></Tool>
              <Tool $gap={8} $w={37} $on><Lines w={24} c="#666" rows={[[0, 24], [5, 19], [0, 24], [5, 19]]} /></Tool>
              <Tool $gap={7} $w={21}><Lines w={21} rows={[[0, 21], [6, 21], [0, 21], [6, 21]]} /></Tool>
              <Tool $gap={15} $w={23}><Lines w={23} rows={[[0, 23], [0, 23], [0, 23], [0, 23], [0, 23]]} /></Tool>
              <Rule $gap={13} />
              <Tool $gap={11} $w={24}><ColumnsIcon /></Tool>
              <Tool $gap={8} $w={9}><Caret /></Tool>
            </ToolRow>
          </div>
          <ToolStack $gap={11} $top={2} $space={10}>
            <CommandRow><TextDirIcon /><CaretHolder $gap={5}><Caret /></CaretHolder></CommandRow>
            <CommandRow><AlignTextIcon /><CaretHolder $gap={5}><Caret /></CaretHolder></CommandRow>
            <CommandRow><SmartArtIcon /><CaretHolder $gap={5}><Caret /></CaretHolder></CommandRow>
          </ToolStack>
        </RibbonGroup>

        <RibbonGroup w={594} name="Drawing" nameW={67} left={250} launcher>
          <Gallery>
            <ShapeGrid>{shapes.map((s, i) => <Ic key={i} w={28} h={27} c="#757575">{s}</Ic>)}</ShapeGrid>
            <GallerySide>
              <GalleryArrow $h={37} $off><Caret up c="#b5b5b5" /></GalleryArrow>
              <GalleryArrow $h={32}><Caret /></GalleryArrow>
              <GalleryArrow $h={37}><Ic w={10} h={10}><path d="M0 1H10" /><path d="M0 4.500H10L5 10Z" fill="#666" stroke="none" /></Ic></GalleryArrow>
            </GallerySide>
          </Gallery>
          <BigButton $gap={7} $w={74} $top={4}>
            <BigIcon><ArrangeIcon /></BigIcon>
            <BigCaption><Fit w={74}>Arrange</Fit></BigCaption>
            <BigCaption $top={7}><Caret /></BigCaption>
          </BigButton>
          <BigButton $gap={7} $w={70} $top={5}>
            <BigIcon $nudge={3}><QuickIcon /></BigIcon>
            <BigCaption $top={-1}><Fit w={52}>Quick</Fit></BigCaption>
            <BigCaption $top={8}><Fit w={54}>Styles</Fit><Caret /></BigCaption>
          </BigButton>
          <ToolStack $gap={6} $top={1} $space={8.5}>
            <Command icon={<FillIcon />} iw={33} label="Shape Fill" w={89} caret={6} />
            <Command icon={<OutlineIcon />} iw={33} label="Shape Outline" w={130} caret={6} />
            <Command icon={<EffectsIcon />} iw={33} label="Shape Effects" w={125} caret={6} />
          </ToolStack>
        </RibbonGroup>

        <RibbonGroup w={154} name="Editing" nameW={56} left={48}>
          <ToolStack $gap={10} $top={1} $space={8.5}>
            <Command icon={<FindIcon />} iw={33} label="Find" w={38} />
            <Command icon={<ReplaceIcon />} iw={33} label="Replace" w={74} caret={14} />
            <Command icon={<SelectIcon />} iw={33} label="Select" w={55} caret={6} />
          </ToolStack>
        </RibbonGroup>
        <Collapse><Ic w={15} h={10} c="#666" sw={3}><path d="M1 9L7.500 2.500L14 9" /></Ic></Collapse>
      </Ribbon>

      <Workspace>
        <ThumbPane>
          {thumbs.map(t => {
            const on = t.n === 208;
            return (
              <ThumbRow key={t.n}>
                <ThumbMeta $on={on}><Fit w={41}>{t.n}</Fit><StarHolder><StarIcon /></StarHolder></ThumbMeta>
                <Thumb $on={on}>
                  {t.titles.map(([s, w]) => <ThumbTitle key={s} $shift={t.shift}><Fit w={w}>{s}</Fit></ThumbTitle>)}
                  <ThumbBody>
                    {t.lines.map(([s, w, b], i) => (
                      <ThumbLine key={i}>
                        <ThumbBullet>{b ? '•' : ''}</ThumbBullet>
                        {s === '@'
                          ? <Fit w={w}>@Controller is used to mark classes as Spring MVC. Used in <Strong>web applications</Strong> with <Strong>REST API</Strong></Fit>
                          : s && <Fit w={w}>{s}</Fit>}
                      </ThumbLine>
                    ))}
                  </ThumbBody>
                </Thumb>
              </ThumbRow>
            );
          })}
        </ThumbPane>
        <ScrollBar $w={25}>
          <ScrollButton><Ic w={13} h={7} c="none"><path d="M0 7L6.500 0L13 7Z" fill="#6c6c6c" /></Ic></ScrollButton>
          <Track $h={603} /><ScrollThumb /><Track $h={25} />
          <ScrollButton><Ic w={13} h={7} c="none"><path d="M0 0H13L6.500 7Z" fill="#6c6c6c" /></Ic></ScrollButton>
        </ScrollBar>
        <PaneEdge />
        <Editor>
          <EditorTop>
            <Canvas>
              <Slide>
                <Frame />
                <SlideTitle>
                  <Fit w={861}>11) What are the major differences between</Fit>
                  <Fit w={706}><Typo $weight={1.5}>RequestMapping</Typo> and <Typo $weight={1.5}>GetMa<Selected>ppi</Selected>ng</Typo>?</Fit>
                </SlideTitle>
                <BodyRow>
                  <Dot />
                  <BodyText>
                    <Fit w={952}><Typo>RequestMapping</Typo> can be used with GET, POST, PUT, and many other request methods using the</Fit>
                    <Fit w={804}>method attribute on the annotation. Whereas <Typo>GetMapping</Typo> is only an extension of</Fit>
                    <Fit w={652}><Typo>RequestMapping</Typo>, which helps you to improve clarity on requests.</Fit>
                  </BodyText>
                </BodyRow>
                <RotateStem />
                {[57, 558, 1058].flatMap(x => [26, 78.5, 131.5].filter(y => !(x === 558 && y === 78.5)).map(y => <Handle key={`${x}-${y}`} $x={x} $y={y} />))}
                <FitButton><Ic w={27} h={27} c="#3f86d9" sw={2}><path d="M13.500 1V9M10 6L13.500 10L17 6M13.500 26V18M10 21L13.500 17L17 21" /><path d="M1 12H26M1 15.500H26" stroke="#999" strokeWidth="1.500" /></Ic></FitButton>
              </Slide>
            </Canvas>
            <ScrollBar $w={26}>
              <ScrollButton><Ic w={12} h={7} c="none"><path d="M0 7L6 0L12 7Z" fill="#6c6c6c" /></Ic></ScrollButton>
              <Track $h={460} /><ScrollThumb /><Track $h={18} />
              <ScrollButton><Ic w={12} h={7} c="none"><path d="M0 0H12L6 7Z" fill="#6c6c6c" /></Ic></ScrollButton>
              <PageArrows>
                <Ic w={13} h={14} c="none"><path d="M0 7L6.500 0L13 7ZM0 14L6.500 7L13 14Z" fill="#6c6c6c" /></Ic>
                <Ic w={13} h={14} c="none"><path d="M0 0H13L6.500 7ZM0 7H13L6.500 14Z" fill="#6c6c6c" /></Ic>
              </PageArrows>
            </ScrollBar>
          </EditorTop>
          <Notes><Fit w={205}>Click to add notes</Fit></Notes>
        </Editor>
      </Workspace>

      <StatusBar>
        <StatusItem $gap={8}><Fit w={132}>Slide 208 of 216</Fit></StatusItem>
        <StatusItem $gap={28}><Ic w={25} h={22}><path d="M12.500 3V21M1 1H9Q12 1 12.500 3Q13 1 16 1H24V4M1 1V18H9Q12 18 12.500 20Q13 18 16 18H24V16" /><path d="M17 7L23 14M23 7L17 14" strokeWidth="2.400" /></Ic></StatusItem>
        <StatusItem $gap={25}><Fit w={183}>English (United States)</Fit></StatusItem>
        <StatusItem $gap={706}><Ic w={19} h={20}><path d="M0 10H19M0 14.500H19M0 19H11" /><path d="M4.500 6L9.500 0L14.500 6Z" fill="#777" stroke="none" /></Ic></StatusItem>
        <StatusItem $gap={8}><Fit w={50}>Notes</Fit></StatusItem>
        <StatusItem $gap={29}><Ic w={22} h={22} c="none"><path d="M0 1H22V16H15L10 22V16H0Z" fill="#767676" /></Ic></StatusItem>
        <StatusItem $gap={6}><Fit w={88}>Comments</Fit></StatusItem>
        <ActiveView><Ic w={21} h={20}><path d="M1 1H20V19H1ZM5.500 1V19M5.500 13.500H20M9 5H17V9.500H9Z" /><path d="M13 5V9" /></Ic></ActiveView>
        <StatusItem $gap={18}><Ic w={22} h={19}><path d="M1 1H8V7H1ZM13 1H20V7H13ZM1 12H8V18H1ZM13 12H20V18H13Z" /></Ic></StatusItem>
        <StatusItem $gap={36}><Ic w={20} h={19}><path d="M10 3V19M1 1H7Q9.500 1 10 3Q10.500 1 13 1H19V16H13Q10.500 16 10 18Q9.500 16 7 16H1ZM3.500 5H8M3.500 8.500H8M3.500 12H8M12 5H16.500M12 8.500H16.500M12 12H16.500" /></Ic></StatusItem>
        <StatusItem $gap={38}><Ic w={19} h={19}><path d="M0 1.500H19M2 3V10.500H17V3M5 6H14M9.500 11V17M5 18H14" /></Ic></StatusItem>
        <StatusItem $gap={28}><Ic w={13} h={3} c="#686868" sw={3}><path d="M0 1.500H13" /></Ic></StatusItem>
        <StatusItem $gap={6}><Ic w={175} h={20} c="#b2b2b2"><path d="M0 10H175M87.500 5V15" /><rect x="52" y="0.500" width="8" height="19" fill="#686868" stroke="none" /></Ic></StatusItem>
        <StatusItem $gap={6}><Ic w={17} h={16} c="#686868" sw={3}><path d="M0 8H17M8.500 0V16" /></Ic></StatusItem>
        <StatusItem $gap={21}><Fit w={35}>66%</Fit></StatusItem>
        <StatusItem $gap={22}><Ic w={22} h={22}><path d="M1 1H21V21H1ZM11 2V8M8.500 5.500L11 3L13.500 5.500M11 20V14M8.500 16.500L11 19L13.500 16.500M2 11H8M5.500 8.500L3 11L5.500 13.500M20 11H14M16.500 8.500L19 11L16.500 13.500" /></Ic></StatusItem>
      </StatusBar>

      <TaskBar>
        <StartButton><Ic w={30} h={30} c="none"><path d="M0 4L12 2.500V14H0ZM14 2L30 0V14H14ZM0 16H12V27.500L0 26ZM14 16H30V30L14 28Z" fill="#fff" /></Ic></StartButton>
        <SearchBox>
          <Ic w={30} h={29} c="#3c3c3c" sw={2.4}><circle cx="19" cy="11" r="9.500" /><path d="M12 18L1 28" /></Ic>
          <Fit w={230}>Type here to search</Fit>
        </SearchBox>
        <TaskIcon $gap={28}><Ic w={28} h={28} c="#e8ecee" sw={3.4}><circle cx="14" cy="14" r="12" /></Ic></TaskIcon>
        <TaskIcon $gap={56}><Ic w={30} h={28} c="#d5dadd" sw={1.8}><path d="M1 0V4H20V0M1 28V23H20V28M3 8H18V19H3ZM27 0V28" /><path d="M24 11H30" strokeWidth="5" stroke="#fff" /></Ic></TaskIcon>
        <TaskIcon $gap={50}><Ic w={39} h={34} c="none"><path d="M0 1H15L18 5H39V33H0Z" fill="#f0a92c" /><path d="M0 8H39V33H0Z" fill="#fbd367" /><path d="M8 18H32V34H26V25H14V34H8Z" fill="#2f8fd6" /></Ic></TaskIcon>
        <TaskTile $gap={20} $w={75} $active><PptIcon /></TaskTile>
        <TaskTile $gap={8} $w={59}><Ic w={38} h={38} c="none"><rect width="38" height="38" fill="#2a3847" /><path d="M17 5L23.500 12L17 19L10.500 12Z" fill="#fff" /><path d="M24 14L30 20L17 33L11 26Z" fill="#4fa3a0" /></Ic></TaskTile>
        <TaskIcon $gap={24}><SpringIcon /></TaskIcon>
        <TaskTile $gap={24} $w={60}><ChromeIcon /></TaskTile>
        <TaskTile $gap={15} $w={60}><Ic w={40} h={38} c="none"><path d="M36 5L40 34L31 38Z" fill="#a8843f" /><path d="M12 2L36 5L31 37L0 28Z" fill="#8fc6d9" /><path d="M12 2L30 4L22 32L0 28Z" fill="#4c9fbb" /><path d="M12 2L30 4L27 14L7 12Z" fill="#b5e0ea" /><path d="M22 32L31 37L35 12Z" fill="#dff0f5" /><path d="M13 2H35" stroke="#dcdcdc" strokeWidth="3" strokeDasharray="2 1.500" /></Ic></TaskTile>
        <TaskTile $gap={14} $w={60}><SpringIcon /></TaskTile>
        <TaskTile $gap={15} $w={60}><Ic w={43} h={43} c="none"><rect width="43" height="43" fill="#f58a1f" /><path d="M27 14L43 30V43H20L12 34Z" fill="#de7410" /><path d="M21.500 14L11 29M21.500 14L32 29" stroke="#fff" strokeWidth="3" /><path d="M15.500 6H27.500V17H15.500ZM6 25H17V35H6ZM26 25H37V35H26Z" fill="#fff" /></Ic></TaskTile>
        <TaskIcon $gap={21}><Ic w={24} h={13} c="#dfe3e6" sw={2.2}><path d="M1 12L12 1L23 12" /></Ic></TaskIcon>
        <TaskIcon $gap={16}><Ic w={29} h={20} c="#e8ecee"><path d="M6 5H26V18H4V11" strokeWidth="1.800" /><path d="M9 8H24V15.500H6V11H9Z" fill="#fff" stroke="none" /><path d="M27.500 8V15M1 1V4M6 1V4M0 4H7V8H0ZM3.500 8V12" strokeWidth="2" /></Ic></TaskIcon>
        <TaskIcon $gap={17}><Ic w={23} h={23} c="#c8ced2" sw={1.8}><path d="M1 22Q2 3 22 1M6 22Q7 8 22 6.500M11 22Q12 13 22 11.500" /><path d="M15.500 22Q16 17 22 16.500" /><circle cx="20.500" cy="20.500" r="2.200" fill="#fff" stroke="none" /></Ic></TaskIcon>
        <TaskIcon $gap={15}><Ic w={30} h={26} c="#dfe3e6" sw={1.8}><path d="M1 9H5L11 3V23L5 17H1ZM15 9Q17.500 13 15 17M19 6Q23.500 13 19 20M24 2Q31 13 24 24" /></Ic></TaskIcon>
        <TrayText $gap={18}><Fit w={40}>ENG</Fit></TrayText>
        <Clock><Fit w={50}>05:16</Fit><Fit w={108}>03-10-2020</Fit></Clock>
        <Notice>
          <Ic w={28} h={28} c="none"><path d="M0 2H28V26H16L13 30L10 26H0Z" fill="#fff" /><path d="M6 9H22M6 14H22M6 19H18" stroke="#2a3840" strokeWidth="2" /></Ic>
          <Badge>3</Badge>
          <Subscribe>
            <Ic w={16} h={11} c="none"><rect width="16" height="11" rx="2" fill="#e8e2e2" /><path d="M6 2.500L11 5.500L6 8.500Z" fill="#c22" /></Ic>
            <Fit w={37}>SUBSCRIBE</Fit>
          </Subscribe>
        </Notice>
        <DesktopEdge />
      </TaskBar>
      <Pointer><Ic w={14} h={24} c="#222" sw={1}><path d="M1 1V20L5 16L8.500 23.500L12 22L9 14.500H14Z" fill="#fff" /></Ic></Pointer>
    </Screen>
  );
}
